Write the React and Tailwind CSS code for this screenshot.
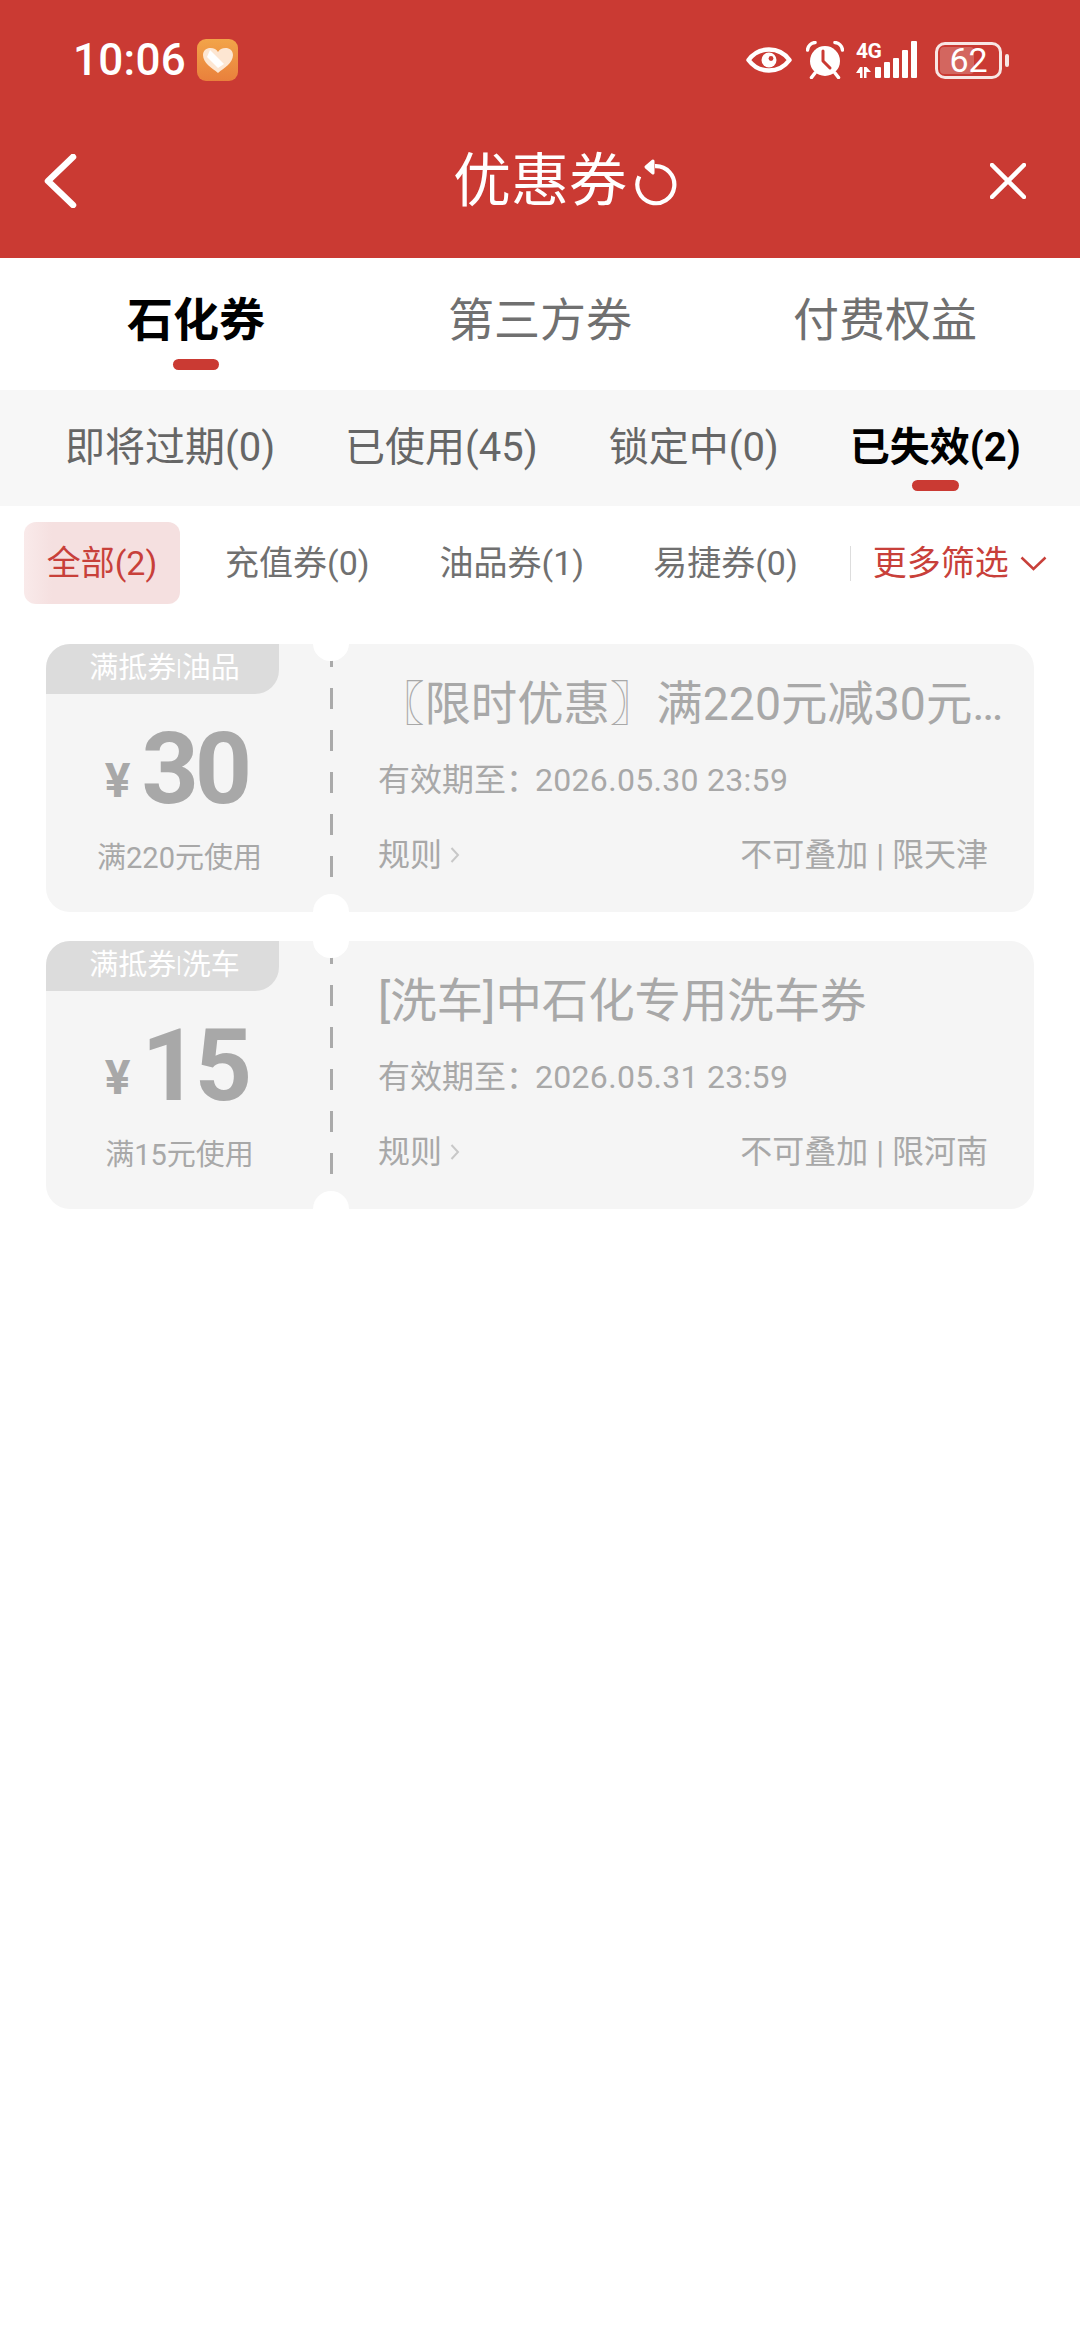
import React from "react";

const Eye = () => (
  <svg width="46" height="26" viewBox="0 0 46 26" fill="none">
    <path d="M2.500 13C8 5.500 15 2.500 23 2.500S38 5.500 43.500 13C38 20.500 31 23.500 23 23.500S8 20.500 2.500 13Z" stroke="#fff" strokeWidth="4.500" strokeLinejoin="round" />
    <circle cx="23" cy="13" r="7.500" fill="#fff" />
    <circle cx="25" cy="11.500" r="2.400" fill="#ca3a33" />
  </svg>
);

const Alarm = () => (
  <svg width="38" height="38" viewBox="0 0 38 38" fill="none">
    <circle cx="19" cy="20" r="15" fill="#fff" />
    <path d="M1.500 9C2 5 5 2 9 1.500" stroke="#fff" strokeWidth="3.500" strokeLinecap="round" />
    <path d="M36.500 9C36 5 33 2 29 1.500" stroke="#fff" strokeWidth="3.500" strokeLinecap="round" />
    <path d="M9 32L5.500 36.500M29 32L32.500 36.500" stroke="#fff" strokeWidth="3.500" strokeLinecap="round" />
    <path d="M17 10V20L24 27" stroke="#ca3a33" strokeWidth="3" strokeLinecap="round" strokeLinejoin="round" />
  </svg>
);

const Signal = () => (
  <svg width="62" height="38" viewBox="0 0 62 38" fill="#fff">
    <path d="M0 32L4 26H6.500V37H4V32ZM8 26H10.500L15 31H10.500V37H8Z" />
    <rect x="19" y="26" width="6" height="11" rx="1" />
    <rect x="28" y="21" width="6" height="16" rx="1" />
    <rect x="37" y="17" width="6" height="20" rx="1" />
    <rect x="46" y="9" width="6" height="28" rx="1" />
    <rect x="55" y="0" width="6" height="37" rx="1" />
  </svg>
);

const Battery = () => (
  <div className="flex items-center gap-[3px]">
    <div className="relative flex h-[37px] w-[67px] items-center justify-center rounded-[10px] border-[3px] border-[#f8e6e4]">
      <div className="absolute inset-y-[2px] left-[2px] w-[34px] rounded-[4px] bg-[#d3665f]" />
      <span className="relative text-[34px] leading-[31px] text-white">62</span>
    </div>
    <div className="h-[13px] w-[4px] rounded-full bg-[#f8e6e4]" />
  </div>
);

const Coupon = ({ tag, kind, amount, cond, title, date, area }) => (
  <div className="relative flex h-[268px] overflow-hidden rounded-[24px] bg-[#f5f5f5]">
    <div className="flex w-[285px] shrink-0 flex-col items-start">
      <div className="flex h-[50px] w-[233px] items-center justify-center rounded-br-[24px] bg-[#dcdcdc] pb-[2px] pl-[4px] text-[29px] leading-none text-white">
        <span>{tag}</span>
        <span className="text-[22px]">|</span>
        <span>{kind}</span>
      </div>
      <div className="flex h-[115px] w-[261px] items-end justify-center pb-[4px] font-bold text-[#a8a8a8]">
        <span className="mr-[11px] text-[48px] leading-[48px]">¥</span>
        <span className="text-[100px] leading-[72px] tracking-[-4px]">{amount}</span>
      </div>
      <div className="mt-[31px] w-[267px] text-center text-[29px] leading-[36px] text-[#a8a8a8]">{cond}</div>
    </div>
    <div className="flex min-w-0 flex-1 flex-col pt-[30px] pr-[46px] pl-[47px] text-[#a8a8a8]">
      <div className="mr-[-26px] h-[60px] truncate text-[46.400px] leading-[60px]">{title}</div>
      <div className="mt-[24px] h-[44px] text-[32px] leading-[44px]">
        <span className="mr-[-3px]">有效期至：</span>
        <span className="tracking-[0.3px]">{date}</span>
      </div>
      <div className="mt-[31px] flex h-[44px] items-center justify-between text-[32px] leading-[44px]">
        <div className="flex items-center gap-[8px]">
          <span>规则</span>
          <svg width="10" height="18" viewBox="0 0 10 18" fill="none">
            <path d="M1.500 2L8 9L1.500 16" stroke="#c8c8c8" strokeWidth="2" />
          </svg>
        </div>
        <span>不可叠加 | {area}</span>
      </div>
    </div>
    <div className="absolute top-[2px] bottom-0 left-[284px] w-[3px] bg-[repeating-linear-gradient(to_bottom,#aaaaaa_0,#aaaaaa_21px,transparent_21px,transparent_42px)]" />
    <div className="absolute top-[-18px] left-[267px] h-[35px] w-[36px] rounded-full bg-white" />
    <div className="absolute bottom-[-18px] left-[267px] h-[36px] w-[36px] rounded-full bg-white" />
  </div>
);

export default function App() {
  return (
    <div className="min-h-[2340px] bg-white font-['Roboto','Noto_Sans_CJK_SC',sans-serif]">
      <header className="h-[258px] bg-[#ca3a33] text-white">
        <div className="flex h-[120px] items-center justify-between pr-[71px] pl-[73px]">
          <div className="flex items-center gap-[11px]">
            <span className="text-[44px] leading-none font-medium tracking-[0.3px]">10:06</span>
            <div className="flex h-[42px] w-[41px] items-center justify-center rounded-[9px] bg-gradient-to-b from-[#f2a449] to-[#e9803c]">
              <svg width="32" height="27" viewBox="0 0 32 27">
                <path d="M16 26C10 21 1 16 1 8C1 3.500 4.500 1 8.500 1C12 1 14.500 2.500 16 5C17.500 2.500 20 1 23.500 1C27.500 1 31 3.500 31 8C31 16 22 21 16 26Z" fill="#fde6d2" />
                <path d="M8 3L22 17L16 21L5 10Z" fill="#fff" />
              </svg>
            </div>
          </div>
          <div className="flex items-center">
            <Eye />
            <div className="ml-[14px]"><Alarm /></div>
            <div className="relative ml-[12px] h-[38px] w-[62px]">
              <span className="absolute top-[0px] left-[0px] text-[21px] leading-[20px] font-bold tracking-[-0.5px]">4G</span>
              <Signal />
            </div>
            <div className="ml-[17px]"><Battery /></div>
          </div>
        </div>
        <div className="relative flex h-[122px] items-center justify-between pr-[54px] pl-[43px]">
          <svg width="34" height="54" viewBox="0 0 34 54" fill="none">
            <path d="M30 3L5 27L30 51" stroke="#fff" strokeWidth="6.500" strokeLinecap="round" strokeLinejoin="round" />
          </svg>
          <div className="absolute inset-x-0 top-0 flex h-full items-center justify-center pl-[50px]">
            <span className="text-[58px] leading-none">优惠券</span>
            <svg className="ml-[6px]" width="44" height="50" viewBox="0 0 44 50" fill="none">
              <path d="M6.300 20.400A18.500 18.500 0 1 0 22 10.200" stroke="#fff" strokeWidth="4.200" />
              <path d="M20 5L13 11L20 17Z" fill="#fff" stroke="#fff" strokeWidth="3" strokeLinejoin="round" />
            </svg>
          </div>
          <svg width="36" height="36" viewBox="0 0 36 36" fill="none">
            <path d="M2 2L34 34M34 2L2 34" stroke="#fff" strokeWidth="4.500" strokeLinecap="round" />
          </svg>
        </div>
      </header>

      <nav className="grid h-[132px] grid-cols-[345px_345px_345px] justify-center">
        <div className="flex flex-col items-center pt-[35px] pl-[2px]">
          <span className="text-[46px] leading-[54px] font-bold text-black">石化券</span>
          <span className="mt-[12px] h-[11px] w-[46px] rounded-full bg-[#ca3a33]" />
        </div>
        <div className="pt-[35px] text-center text-[46px] leading-[54px] text-[#707070]">第三方券</div>
        <div className="pt-[35px] text-center text-[46px] leading-[54px] text-[#707070]">付费权益</div>
      </nav>

      <div className="flex h-[116px] bg-[#f7f7f7] pt-[33px] text-[40px] leading-[50px] text-[#666666]">
        <span className="ml-[65px]">即将过期(0)</span>
        <span className="ml-[70px]">已使用(45)</span>
        <span className="ml-[71px]">锁定中(0)</span>
        <div className="ml-[71px] flex flex-col items-center">
          <span className="font-bold text-black">已失效(2)</span>
          <span className="mt-[7px] h-[11px] w-[47px] rounded-full bg-[#ca3a33]" />
        </div>
      </div>

      <div className="flex h-[98px] items-end text-[34px] leading-none text-[#707070]">
        <div className="ml-[24px] flex h-[82px] w-[156px] items-center justify-center rounded-[12px] bg-[linear-gradient(to_right,#f9eaea_0,#f5e0e0_28px)] text-[#c8403a]">
          全部(2)
        </div>
        <div className="flex h-[82px] flex-1 items-center">
          <span className="ml-[45px]">充值券(0)</span>
          <span className="ml-[70px]">油品券(1)</span>
          <span className="ml-[69px]">易捷券(0)</span>
          <span className="ml-[52px] h-[35px] w-[1px] bg-[#dddddd]" />
          <span className="ml-[22px] text-[#c8403a]">更多筛选</span>
          <svg className="ml-[11px]" width="27" height="15" viewBox="0 0 27 15" fill="none">
            <path d="M1.500 1.500L13.500 13L25.500 1.500" stroke="#c8403a" strokeWidth="2.500" />
          </svg>
        </div>
      </div>

      <main className="flex flex-col gap-[29px] pt-[40px] pr-[46px] pl-[46px]">
        <Coupon tag="满抵券" kind="油品" amount="30" cond="满220元使用" title="〖限时优惠〗满220元减30元优惠券活动" date="2026.05.30 23:59" area="限天津" />
        <Coupon tag="满抵券" kind="洗车" amount="15" cond="满15元使用" title="[洗车]中石化专用洗车券" date="2026.05.31 23:59" area="限河南" />
      </main>
    </div>
  );
}
